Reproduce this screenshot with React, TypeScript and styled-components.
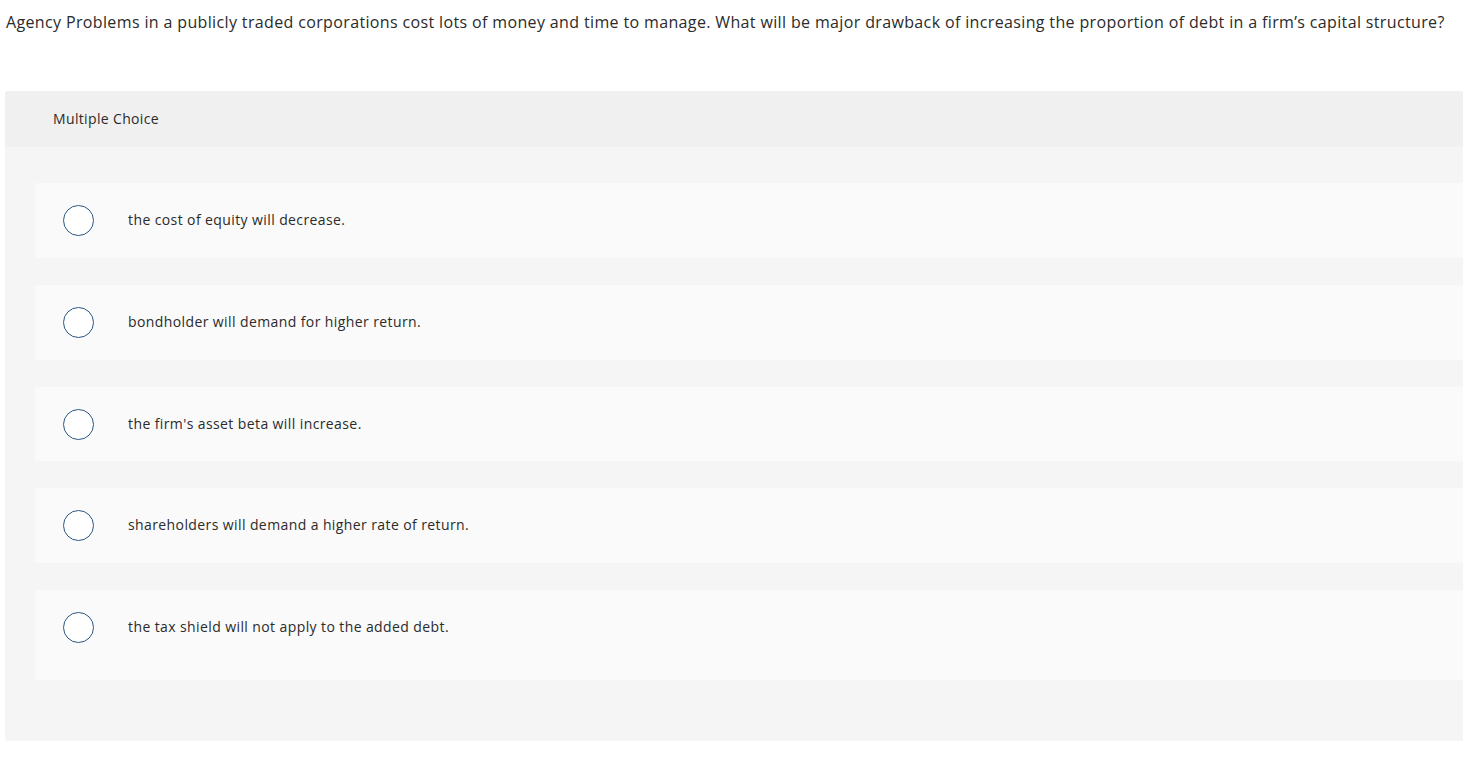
import styled, { createGlobalStyle } from "styled-components";

const options = [
  { id: "a", text: "the cost of equity will decrease." },
  { id: "b", text: "bondholder will demand for higher return." },
  { id: "c", text: "the firm's asset beta will increase." },
  { id: "d", text: "shareholders will demand a higher rate of return." },
  { id: "e", text: "the tax shield will not apply to the added debt.", tall: true },
];

export default function App() {
  return (
    <>
      <GlobalStyle />
      <Page>
        <Question>
          Agency Problems in a publicly traded corporations cost lots of money
          and time to manage. What will be major drawback of increasing the
          proportion of debt in a firm’s capital structure?
        </Question>
        <Panel>
          <PanelHeader>Multiple Choice</PanelHeader>
          <Choices>
            {options.map((opt) => (
              <Choice key={opt.id} $tall={opt.tall}>
                <Radio />
                <ChoiceText>{opt.text}</ChoiceText>
              </Choice>
            ))}
          </Choices>
        </Panel>
      </Page>
    </>
  );
}

const GlobalStyle = createGlobalStyle`
  html, body {
    margin: 0;
    padding: 0;
    background: #ffffff;
    overflow: hidden;
  }
  body {
    font-family: "Open Sans", "Liberation Sans", sans-serif;
    color: #2b2b2b;
  }
`;

const Page = styled.div`
  padding: 12px 0 0 5px;
  width: 1500px;
`;

const Question = styled.p`
  margin: 0 0 0 1px;
  width: 1457px;
  font-size: 16px;
  line-height: 20px;
  letter-spacing: 0.36px;
  white-space: nowrap;
`;

const Panel = styled.section`
  margin-top: 59px;
  background: #f5f5f5;
  border-radius: 3px;
  overflow: hidden;
`;

const PanelHeader = styled.div`
  height: 56px;
  display: flex;
  align-items: center;
  padding-left: 48px;
  padding-bottom: 2px;
  box-sizing: border-box;
  background: #f0f0f0;
  font-size: 14px;
  letter-spacing: 0.35px;
  color: #2b2b2b;
`;

const Choices = styled.div`
  display: flex;
  flex-direction: column;
  gap: 27px;
  padding: 36px 0 61px 30px;
`;

const Choice = styled.label<{ $tall?: boolean }>`
  display: flex;
  align-items: flex-start;
  gap: 34px;
  padding: 22px 28px ${(p) => (p.$tall ? "37px" : "21.75px")};
  background: #fafafa;
  border-radius: 3px;
`;

const Radio = styled.span`
  flex: none;
  width: 29px;
  height: 29px;
  border: 1px solid #2a5785;
  border-radius: 50%;
  background: #ffffff;
`;

const ChoiceText = styled.span`
  font-size: 14px;
  line-height: 30px;
  letter-spacing: 0.4px;
  color: #2b2b2b;
`;
